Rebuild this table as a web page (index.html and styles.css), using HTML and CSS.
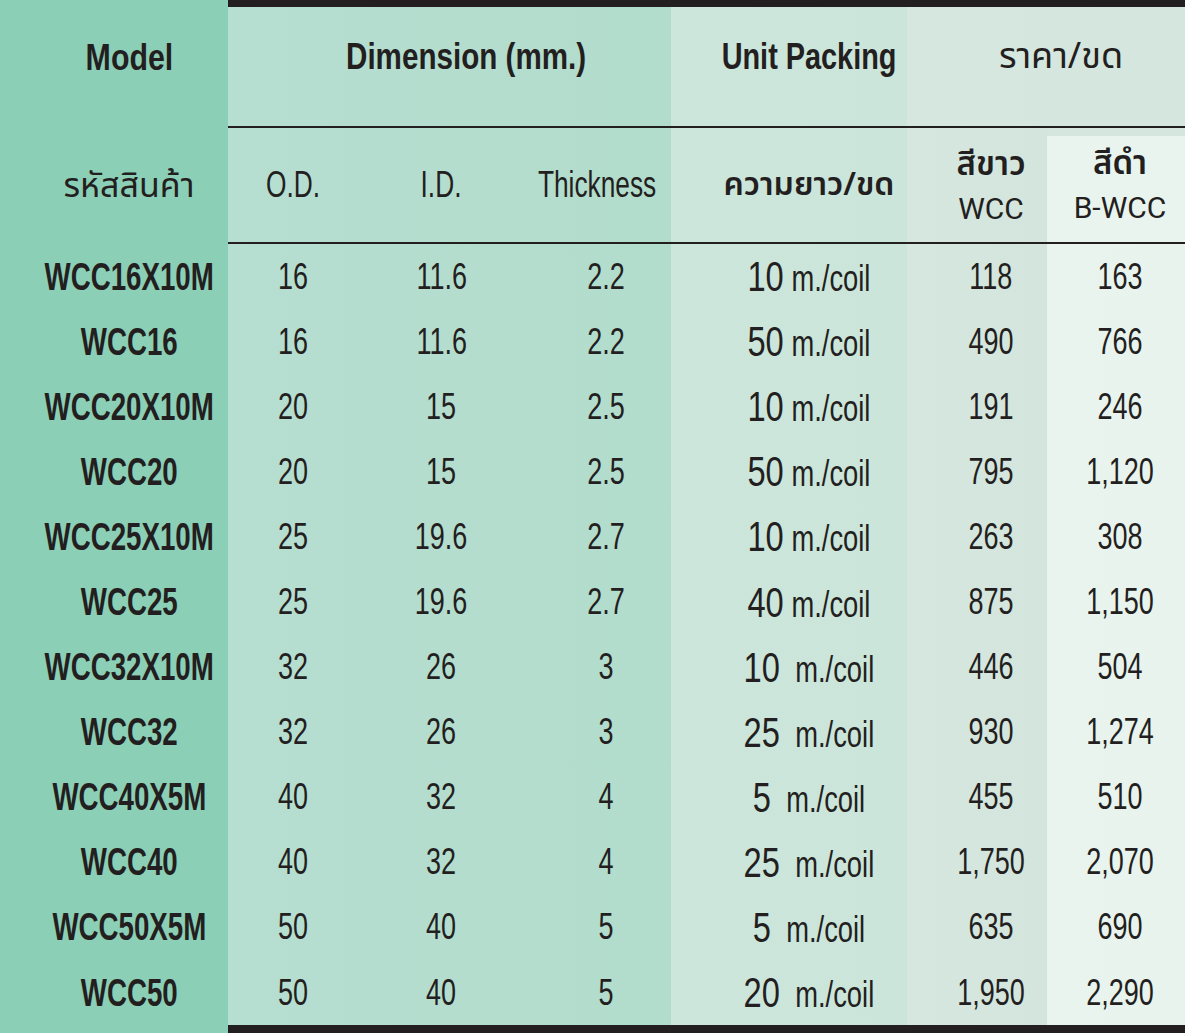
FILE: index.html
```html
<!DOCTYPE html>
<html lang="th">
<head>
<meta charset="utf-8">
<title>WCC price table</title>
<link rel="stylesheet" href="styles.css">
</head>
<body>
<div class="sheet">
  <div class="blank"></div>
  <div class="bar"></div>

  <div class="h1 model-h"><span class="n n-model">Model</span></div>
  <div class="h1 dim-h"><span class="n n-dim">Dimension (mm.)</span></div>
  <div class="h1 pack-h"><span class="n n-pack">Unit Packing</span></div>
  <div class="h1 price-h thai">ราคา/ขด</div>

  <div class="h2 model-h2 thai">รหัสสินค้า</div>
  <div class="h2 od"><span class="n n-h2">O.D.</span></div>
  <div class="h2 id"><span class="n n-h2">I.D.</span></div>
  <div class="h2 th"><span class="n n-h2">Thickness</span></div>
  <div class="h2 pk thai">ความยาว/ขด</div>
  <div class="h2 wh thai"><div class="two">สีขาว<br><span class="latin">WCC</span></div></div>
  <div class="h2 bk thai"><div class="bk-inner"><div class="two">สีดำ<br><span class="latin">B-WCC</span></div></div></div>

  <div class="c model"><span class="n">WCC16X10M</span></div><div class="c od"><span class="n">16</span></div><div class="c id"><span class="n">11.6</span></div><div class="c th"><span class="n">2.2</span></div><div class="c pk"><span class="n"><b>10</b> m./coil</span></div><div class="c wh"><span class="n">118</span></div><div class="c bk"><span class="n">163</span></div>
  <div class="c model"><span class="n">WCC16</span></div><div class="c od"><span class="n">16</span></div><div class="c id"><span class="n">11.6</span></div><div class="c th"><span class="n">2.2</span></div><div class="c pk"><span class="n"><b>50</b> m./coil</span></div><div class="c wh"><span class="n">490</span></div><div class="c bk"><span class="n">766</span></div>
  <div class="c model"><span class="n">WCC20X10M</span></div><div class="c od"><span class="n">20</span></div><div class="c id"><span class="n">15</span></div><div class="c th"><span class="n">2.5</span></div><div class="c pk"><span class="n"><b>10</b> m./coil</span></div><div class="c wh"><span class="n">191</span></div><div class="c bk"><span class="n">246</span></div>
  <div class="c model"><span class="n">WCC20</span></div><div class="c od"><span class="n">20</span></div><div class="c id"><span class="n">15</span></div><div class="c th"><span class="n">2.5</span></div><div class="c pk"><span class="n"><b>50</b> m./coil</span></div><div class="c wh"><span class="n">795</span></div><div class="c bk"><span class="n">1,120</span></div>
  <div class="c model"><span class="n">WCC25X10M</span></div><div class="c od"><span class="n">25</span></div><div class="c id"><span class="n">19.6</span></div><div class="c th"><span class="n">2.7</span></div><div class="c pk"><span class="n"><b>10</b> m./coil</span></div><div class="c wh"><span class="n">263</span></div><div class="c bk"><span class="n">308</span></div>
  <div class="c model"><span class="n">WCC25</span></div><div class="c od"><span class="n">25</span></div><div class="c id"><span class="n">19.6</span></div><div class="c th"><span class="n">2.7</span></div><div class="c pk"><span class="n"><b>40</b> m./coil</span></div><div class="c wh"><span class="n">875</span></div><div class="c bk"><span class="n">1,150</span></div>
  <div class="c model"><span class="n">WCC32X10M</span></div><div class="c od"><span class="n">32</span></div><div class="c id"><span class="n">26</span></div><div class="c th"><span class="n">3</span></div><div class="c pk"><span class="n"><b>10</b>&nbsp; m./coil</span></div><div class="c wh"><span class="n">446</span></div><div class="c bk"><span class="n">504</span></div>
  <div class="c model"><span class="n">WCC32</span></div><div class="c od"><span class="n">32</span></div><div class="c id"><span class="n">26</span></div><div class="c th"><span class="n">3</span></div><div class="c pk"><span class="n"><b>25</b>&nbsp; m./coil</span></div><div class="c wh"><span class="n">930</span></div><div class="c bk"><span class="n">1,274</span></div>
  <div class="c model"><span class="n">WCC40X5M</span></div><div class="c od"><span class="n">40</span></div><div class="c id"><span class="n">32</span></div><div class="c th"><span class="n">4</span></div><div class="c pk"><span class="n"><b>5</b>&nbsp; m./coil</span></div><div class="c wh"><span class="n">455</span></div><div class="c bk"><span class="n">510</span></div>
  <div class="c model"><span class="n">WCC40</span></div><div class="c od"><span class="n">40</span></div><div class="c id"><span class="n">32</span></div><div class="c th"><span class="n">4</span></div><div class="c pk"><span class="n"><b>25</b>&nbsp; m./coil</span></div><div class="c wh"><span class="n">1,750</span></div><div class="c bk"><span class="n">2,070</span></div>
  <div class="c model"><span class="n">WCC50X5M</span></div><div class="c od"><span class="n">50</span></div><div class="c id"><span class="n">40</span></div><div class="c th"><span class="n">5</span></div><div class="c pk"><span class="n"><b>5</b>&nbsp; m./coil</span></div><div class="c wh"><span class="n">635</span></div><div class="c bk"><span class="n">690</span></div>
  <div class="c model"><span class="n">WCC50</span></div><div class="c od"><span class="n">50</span></div><div class="c id"><span class="n">40</span></div><div class="c th"><span class="n">5</span></div><div class="c pk"><span class="n"><b>20</b>&nbsp; m./coil</span></div><div class="c wh"><span class="n">1,950</span></div><div class="c bk"><span class="n">2,290</span></div>

  <div class="blank"></div>
  <div class="bar"></div>
</div>
</body>
</html>
```

FILE: styles.css
```css
html, body {
  margin: 0;
  padding: 0;
}
body {
  width: 1185px;
  height: 1033px;
  overflow: hidden;
  background: #8ccfb7;
}
.sheet {
  display: grid;
  grid-template-columns: 228px 131px 165px 147px 236px 140px 138px;
  grid-template-rows: 7px 121px 116px repeat(12, 65.1px) 8px;
  width: 1185px;
  height: 1033px;
  background: linear-gradient(to right,
    #8ccfb7 0, #8ccfb7 228px,
    #b6ded1 228px, #b2dccc 671px,
    #cce6dc 671px, #cbe5da 907px,
    #d5e7df 907px, #d3e5dd 1047px,
    #e9f4ef 1047px, #e8f3ee 1185px);
  font-family: "Liberation Sans", Arial, sans-serif;
  color: #231f20;
}
.blank { grid-column: 1; }
.bar {
  grid-column: 2 / -1;
  background: #231f20;
}
.h1, .h2, .c {
  display: flex;
  align-items: center;
  justify-content: center;
  text-align: center;
  white-space: nowrap;
}
.n {
  display: inline-block;
  white-space: nowrap;
  transform: scaleX(0.75);
}
.h1 {
  font-weight: bold;
  font-size: 37px;
  border-bottom: 2px solid #231f20;
  padding-bottom: 20px;
}
.h1.model-h {
  border-bottom: none;
  padding-left: 30px;
}
.n-model { transform: scaleX(0.82); }
.n-dim { transform: scaleX(0.8); }
.n-pack { transform: scaleX(0.78); }
.dim-h { grid-column: 2 / 5; padding-left: 34px; }
.pack-h { padding-left: 40px; }
.price-h {
  grid-column: 6 / 8;
  padding-left: 30px;
  background: linear-gradient(to right, #d5e7df, #d4e6de);
}
.h2 {
  font-size: 36px;
  border-bottom: 2px solid #231f20;
}
.n-h2 { transform: scaleX(0.73); }
.h2.model-h2 { border-bottom: none; padding-left: 30px; }
.thai {
  font-family: "Noto Sans Thai", "Noto Sans", "DejaVu Sans", sans-serif;
  font-size: 34px;
}
.h1.thai { font-weight: normal; font-size: 36px; }
.h2.pk { font-weight: 600; font-size: 32px; padding-left: 40px; }
.two {
  line-height: 44px;
  font-size: 33px;
  font-weight: 600;
}
.latin {
  font-family: Roboto, "Liberation Sans", sans-serif;
  font-weight: normal;
  font-size: 30px;
}
.h2.wh { padding-left: 28px; }
.h2.wh .two { margin-top: 4px; }
.h2.bk {
  align-items: stretch;
  padding-top: 8px;
  background: #d4e6de;
}
.bk-inner {
  flex: 1;
  display: flex;
  align-items: center;
  justify-content: center;
  background: #e9f4ef;
  padding-left: 8px;
}
.bk-inner .two { margin-top: -6px; }
.c {
  font-size: 36px;
}
.c.model {
  font-weight: bold;
  font-size: 39px;
  padding-left: 30px;
}
.c.model .n { transform: scaleX(0.71); }
.c.th { padding-left: 18px; }
.c.pk { padding-left: 40px; }
.c.pk .n { transform: scaleX(0.76); }
.c.pk b { font-weight: normal; font-size: 43px; }
.c.wh { padding-left: 28px; }
.c.bk { padding-left: 8px; }
```
